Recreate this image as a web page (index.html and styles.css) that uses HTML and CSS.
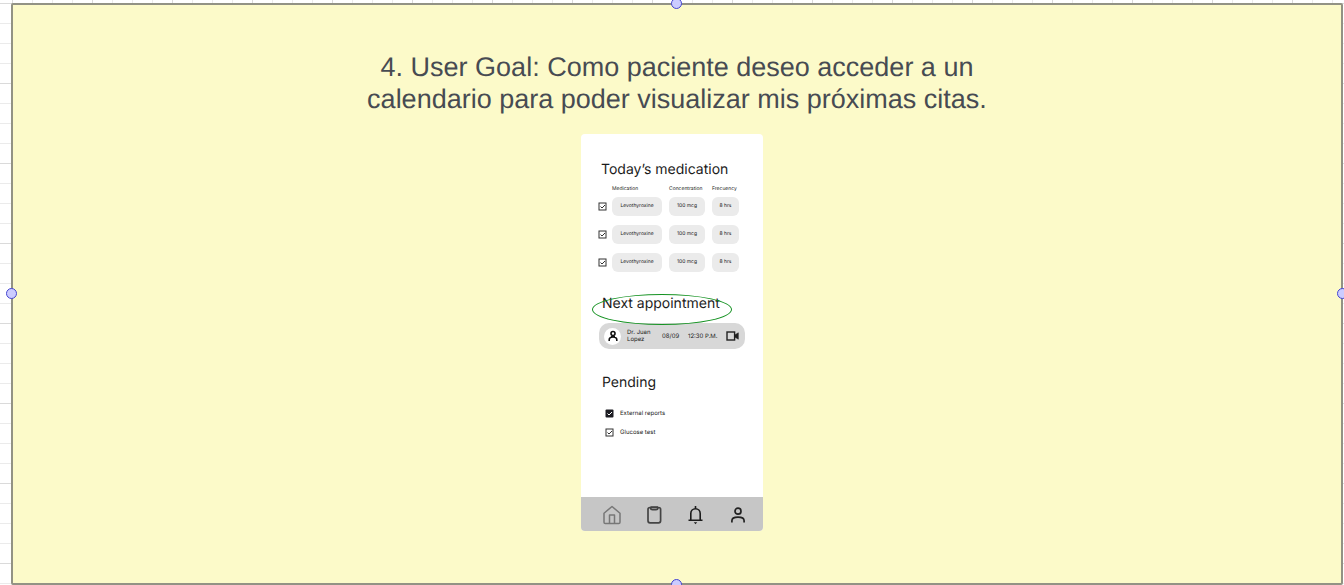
FILE: index.html
```html
<!DOCTYPE html>
<html lang="es">
<head>
<meta charset="utf-8">
<meta name="viewport" content="width=device-width, initial-scale=1">
<title>User Goal 4</title>
<link rel="stylesheet" href="styles.css">
</head>
<body>
<main class="canvas">
  <section class="frame">
    <span class="handle handle-top"></span>
    <span class="handle handle-right"></span>
    <span class="handle handle-bottom"></span>
    <span class="handle handle-left"></span>
    <h1 class="goal">4. User Goal: Como paciente deseo acceder a un calendario para poder visualizar mis próximas citas.</h1>
    <article class="phone" lang="en">
      <div class="screen">
        <h2 class="heading">Today’s medication</h2>
        <table class="meds">
          <thead>
            <tr><th class="col-check"></th><th class="col-name">Medication</th><th class="col-dose">Concentration</th><th class="col-freq">Frecuency</th></tr>
          </thead>
          <tbody>
            <tr><td><input class="tick" type="checkbox" checked aria-label="Levothyroxine, first dose"></td><td><span class="pill">Levothyroxine</span></td><td><span class="pill">100 mcg</span></td><td><span class="pill">8 hrs</span></td></tr>
            <tr><td><input class="tick" type="checkbox" checked aria-label="Levothyroxine, second dose"></td><td><span class="pill">Levothyroxine</span></td><td><span class="pill">100 mcg</span></td><td><span class="pill">8 hrs</span></td></tr>
            <tr><td><input class="tick" type="checkbox" checked aria-label="Levothyroxine, third dose"></td><td><span class="pill">Levothyroxine</span></td><td><span class="pill">100 mcg</span></td><td><span class="pill">8 hrs</span></td></tr>
          </tbody>
        </table>
        <h2 class="heading heading-next">Next appointment<span class="ring"></span></h2>
        <div class="appointment">
          <span class="avatar">
            <svg width="12" height="12" viewBox="0 0 12 12" fill="none" stroke="#111" stroke-width="1.6"><circle cx="6" cy="3.5" r="2"/><path d="M2.200 11V9.800C2.200 8 3.400 7 6 7s3.800 1 3.800 2.800V11M4 6.800h4"/></svg>
          </span>
          <span class="doctor">Dr. Juan Lopez</span>
          <span class="date">08/09</span>
          <span class="time">12:30 P.M.</span>
          <svg class="video" width="13" height="10" viewBox="0 0 13 10"><rect x="1" y="1" width="7.6" height="8" fill="none" stroke="#222" stroke-width="1.4"/><path d="M8.800 4 12.300 1.800v6.400L8.800 6z" fill="#222" stroke="#222" stroke-width=".6"/></svg>
        </div>
        <h2 class="heading heading-pending">Pending</h2>
        <div class="pending">
          <label class="task"><input class="tick tick-solid" type="checkbox" checked>External reports</label>
          <label class="task"><input class="tick" type="checkbox" checked>Glucose test</label>
        </div>
      </div>
      <nav class="tabs">
        <button class="tab" type="button" aria-label="Home">
          <svg width="20" height="20" viewBox="0 0 20 20" fill="none" stroke="#777" stroke-width="1.5" stroke-linejoin="round"><path d="M2 8.2 10 1.500l8 6.700v9q0 1.300-1.300 1.300H3.300Q2 18.500 2 17.200z"/><path d="M7.500 18.500V10h5v8.500"/></svg>
        </button>
        <button class="tab" type="button" aria-label="Reports">
          <svg width="20" height="20" viewBox="0 0 20 20" fill="none" stroke="#444" stroke-width="1.700"><rect x="4" y="2.500" width="12.600" height="15.300" rx="2"/><path d="M6.500 2.500q0 2.200 2 2.200h3.500q2 0 2-2.200M6.500 2h7.500"/></svg>
        </button>
        <button class="tab" type="button" aria-label="Notifications">
          <svg width="20" height="20" viewBox="0 0 20 20" fill="none" stroke="#1c1c1c" stroke-width="1.600"><path d="M2.500 15.200h14M4.800 15V8.500a4.700 4.700 0 0 1 9.400 0V15M9.500 3.500V1"/><path d="M7.800 17.200h3.400L9.500 19.200z" fill="#1c1c1c" stroke="none"/></svg>
        </button>
        <button class="tab" type="button" aria-label="Profile">
          <svg width="20" height="20" viewBox="0 0 20 20" fill="none" stroke="#222" stroke-width="1.700"><circle cx="10" cy="6.200" r="3"/><path d="M3.900 17.500v-1.700q0-3.600 6.100-3.600t6.100 3.600v1.700"/></svg>
        </button>
      </nav>
    </article>
  </section>
</main>
</body>
</html>
```

FILE: styles.css
```css
* {
  box-sizing: border-box;
}

body {
  margin: 0;
}

.canvas {
  display: flex;
  min-height: 100vh;
  padding: 3px 1px 0 11px;
  overflow: hidden;
  background-color: #fff;
  background-image:
    linear-gradient(#dadada 1px, transparent 1px),
    linear-gradient(90deg, #dadada 1px, transparent 1px),
    linear-gradient(#ebebeb 1px, transparent 1px),
    linear-gradient(90deg, #ebebeb 1px, transparent 1px);
  background-size: 80px 80px, 80px 80px, 20px 20px, 20px 20px;
  background-position: 12px 3px;
}

.frame {
  position: relative;
  flex: 1;
  display: flex;
  flex-direction: column;
  align-items: center;
  padding: 46px 20px 48px;
  border: 2px solid #929284;
  border-radius: 2px;
  background: #fcfac9;
}

.handle {
  position: absolute;
  width: 11px;
  height: 11px;
  border: 1px solid #4545d0;
  border-radius: 50%;
  background: #ccccff;
}

.handle-top {
  top: -7px;
  left: calc(50% - 6px);
}

.handle-bottom {
  bottom: -7px;
  left: calc(50% - 6px);
}

.handle-left {
  left: -7px;
  top: calc(50% - 6px);
}

.handle-right {
  right: -7px;
  top: calc(50% - 6px);
}

.goal {
  max-width: 640px;
  margin: 0 0 19px;
  color: #474b52;
  font: 400 27px/32px "Liberation Sans", Arial, sans-serif;
  text-align: center;
  text-rendering: geometricPrecision;
}

.phone {
  width: 182px;
  margin-right: 10px;
  overflow: hidden;
  border-radius: 4px;
  background: #fff;
  color: #222;
  font: 5px/7px Inter, sans-serif;
  text-rendering: geometricPrecision;
}

.screen {
  padding: 26px 16px 60px;
}

.heading {
  position: relative;
  margin: 0 0 0 4px;
  color: #1c1c1c;
  font-size: 14px;
  font-weight: 400;
  line-height: 20px;
}

.meds {
  width: 142px;
  margin-top: 6px;
  border-collapse: collapse;
  table-layout: fixed;
}

.meds th {
  padding: 0;
  font-weight: 400;
  text-align: left;
  white-space: nowrap;
}

.meds td {
  padding: 4px 7px 5px 0;
}

.meds td:first-child {
  padding-left: 1px;
}

.meds td:last-child {
  padding-right: 0;
}

.col-check {
  width: 15px;
}

.col-name {
  width: 57px;
}

.col-dose {
  width: 43px;
}

.pill {
  display: block;
  border-radius: 6px;
  background: #ebebeb;
  line-height: 19px;
  text-align: center;
  white-space: nowrap;
}

.tick {
  appearance: none;
  display: block;
  flex: none;
  width: 9px;
  height: 9px;
  margin: 0;
  background: url("data:image/svg+xml,%3Csvg xmlns='http://www.w3.org/2000/svg' viewBox='0 0 9 9' fill='none' stroke='%23333'%3E%3Crect x='1' y='1' width='7' height='7'/%3E%3Cpath d='M2.500 4.500 4 6l3-3'/%3E%3C/svg%3E");
}

.tick-solid {
  background: url("data:image/svg+xml,%3Csvg xmlns='http://www.w3.org/2000/svg' viewBox='0 0 9 9' fill='none'%3E%3Crect x='.5' y='.5' width='8' height='8' rx='1' fill='%231c1c22'/%3E%3Cpath d='M2.500 4.500 4 6l3-3' stroke='white'/%3E%3C/svg%3E");
}

.heading-next {
  margin-top: 17px;
  margin-left: 5px;
}

.ring {
  position: absolute;
  top: 0;
  left: -10px;
  width: 140px;
  height: 31px;
  border: 1px solid #159222;
  border-radius: 50%;
}

.appointment {
  display: flex;
  align-items: center;
  width: 146px;
  height: 26px;
  margin: 9px 0 0 2px;
  padding: 0 6px 0 5px;
  border-radius: 10px;
  background: #d8d8d8;
  font-size: 6px;
}

.avatar {
  display: grid;
  place-items: center;
  width: 17px;
  height: 17px;
  border-radius: 50%;
  background: #fff;
}

.doctor {
  width: 30px;
  margin-left: 6px;
}

.date {
  width: 18px;
  margin-left: 5px;
  white-space: nowrap;
}

.time {
  margin-left: 8px;
  white-space: nowrap;
}

.video {
  margin-left: auto;
}

.heading-pending {
  margin-top: 24px;
  margin-left: 5px;
}

.pending {
  display: grid;
  gap: 10px;
  margin: 16px 0 0 8px;
  font-size: 6px;
}

.task {
  display: flex;
  align-items: center;
  gap: 6px;
}

.tabs {
  display: flex;
  justify-content: space-between;
  padding: 8px 15px 6px 21px;
  background: #c6c6c6;
}

.tab {
  display: block;
  height: 20px;
  padding: 0;
  border: 0;
  background: none;
}

.tab svg {
  display: block;
}
```
